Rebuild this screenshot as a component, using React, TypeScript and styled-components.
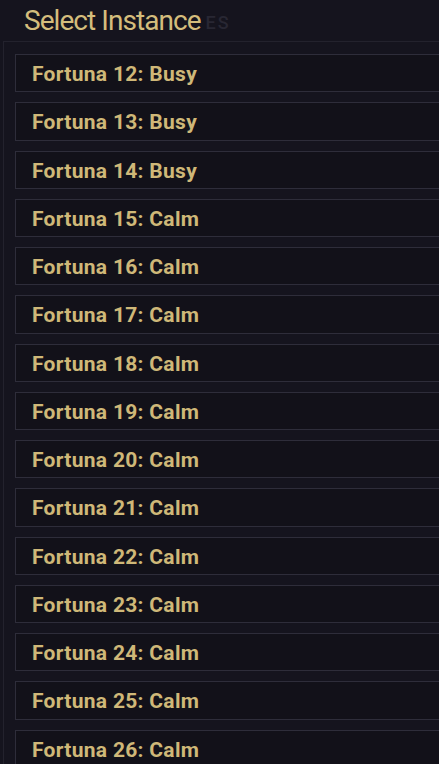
import React from "react";
import styled, { createGlobalStyle } from "styled-components";

const Global = createGlobalStyle`
  html, body { margin: 0; padding: 0; background: #15141e; overflow: hidden; }
  body { font-family: Roboto, "Liberation Sans", sans-serif; }
`;

const Page = styled.div`
  width: 439px;
  height: 764px;
  overflow: hidden;
  background: #15141e;
  display: flex;
  flex-direction: column;
`;

const Header = styled.div`
  display: flex;
  align-items: flex-start;
  height: 42px;
  padding-left: 24px;
  gap: 5px;
`;

const FadedLabel = styled.div`
  margin-top: 14px;
  font-size: 18px;
  line-height: 18px;
  letter-spacing: 2px;
  color: #282733;
  font-weight: 500;
`;

const Title = styled.h1`
  margin: 1px 0 0;
  font-size: 28px;
  font-weight: 400;
  line-height: 40px;
  color: #d4bd7c;
  letter-spacing: -0.95px;
`;

const Panel = styled.div`
  flex: 1;
  margin-left: 3px;
  width: 460px;
  border: 1px solid #23222d;
  border-right: none;
  border-bottom: none;
  padding: 12px 0 0 11px;
  display: flex;
  flex-direction: column;
  gap: 10px;
`;

const Row = styled.div`
  box-sizing: border-box;
  height: 38.25px;
  width: 470px;
  flex-shrink: 0;
  border: 1px solid #2e2d3a;
  background: #121119;
  display: flex;
  align-items: center;
  padding-left: 16px;
  padding-top: 2px;
  font-size: 21px;
  line-height: 24px;
  font-weight: 700;
  letter-spacing: 0.3px;
  color: #cfb878;
`;

const items: [number, string][] = [
  [12, "Busy"], [13, "Busy"], [14, "Busy"], [15, "Calm"], [16, "Calm"],
  [17, "Calm"], [18, "Calm"], [19, "Calm"], [20, "Calm"], [21, "Calm"],
  [22, "Calm"], [23, "Calm"], [24, "Calm"], [25, "Calm"], [26, "Calm"],
];

export default function App() {
  return (
    <Page>
      <Global />
      <Header>
        <Title>Select Instance</Title>
        <FadedLabel>ES</FadedLabel>
      </Header>
      <Panel>
        {items.map(([n, s]) => (
          <Row key={n}>Fortuna {n}: {s}</Row>
        ))}
      </Panel>
    </Page>
  );
}
